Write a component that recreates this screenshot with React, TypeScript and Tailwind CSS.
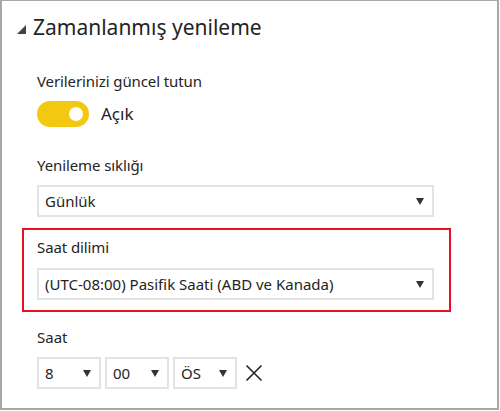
import React from "react";

const font = { fontFamily: '"Noto Sans", "Open Sans", sans-serif' };

function Arrow() {
  return (
    <svg width="8" height="7" viewBox="0 0 8 7" className="shrink-0">
      <path d="M0 0 H8 L4 7 Z" fill="#333333" />
    </svg>
  );
}

function Select({ value, className = "" }: { value: string; className?: string }) {
  return (
    <div
      className={`h-[32px] border-2 border-[#e3e3e3] bg-white flex items-center justify-between pl-[6px] pr-[8px] text-[15px] text-[#252423] ${className}`}
    >
      <span>{value}</span>
      <Arrow />
    </div>
  );
}

export default function App() {
  return (
    <div
      className="w-[499px] h-[410px] bg-white border-2 border-t border-[#a8a8a8] relative"
      style={font}
    >
      <div className="flex items-center pl-[15px] pt-[12px] h-[40px]">
        <svg width="9" height="9" viewBox="0 0 9 9" className="mr-[7px] mt-[4px]">
          <path d="M9 0 V9 H0 Z" fill="#444444" />
        </svg>
        <span className="text-[21px] leading-[28px] text-[#252423]">Zamanlanmış yenileme</span>
      </div>

      <div className="pl-[35px] flex flex-col">
        <div className="mt-[30px] text-[15px] leading-[20px] tracking-[-0.1px] text-[#252423]">Verilerinizi güncel tutun</div>
        <div className="mt-[10px] flex items-center h-[26px]">
          <div className="w-[52px] h-[26px] rounded-full bg-[#f2c811] flex items-center justify-end pr-[6px]">
            <div className="w-[14px] h-[14px] rounded-full bg-white" />
          </div>
          <span className="ml-[12px] text-[17px] text-[#252423]">Açık</span>
        </div>

        <div className="mt-[28px] text-[15px] leading-[20px] tracking-[-0.1px] text-[#252423]">Yenileme sıklığı</div>
        <Select value="Günlük" className="mt-[10px] w-[397px]" />

        <div className="mt-[11px] -ml-[15px] w-[429px] border-2 border-[#e81123] pl-[13px] pt-[7px] pb-[10px]">
          <div className="text-[15px] leading-[20px] tracking-[-0.1px] text-[#252423]">Saat dilimi</div>
          <Select value="(UTC-08:00) Pasifik Saati (ABD ve Kanada)" className="mt-[11px] w-[397px]" />
        </div>

        <div className="mt-[15px] text-[15px] leading-[20px] text-[#252423]">Saat</div>
        <div className="mt-[10px] flex items-center gap-[4px]">
          <Select value="8" className="w-[64px]" />
          <Select value="00" className="w-[64px]" />
          <Select value="ÖS" className="w-[64px]" />
          <svg width="18" height="18" viewBox="0 0 18 18" className="ml-[4px]">
            <path d="M1.5 1.5 L16.5 16.5 M16.5 1.5 L1.5 16.5" stroke="#252423" strokeWidth="1.6" />
          </svg>
        </div>
      </div>
    </div>
  );
}
